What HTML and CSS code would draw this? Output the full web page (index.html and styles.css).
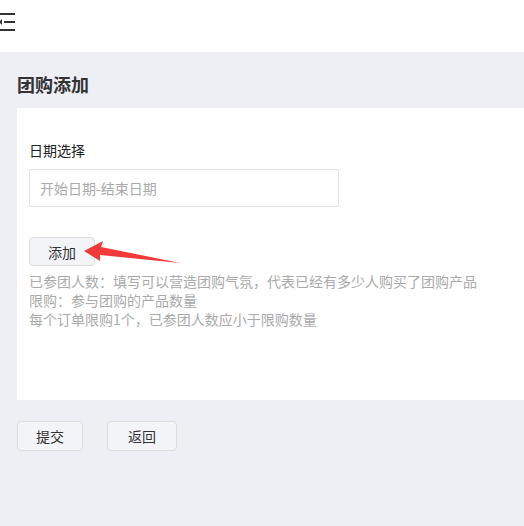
FILE: index.html
```html
<!DOCTYPE html>
<html lang="zh-CN">
<head>
  <meta charset="UTF-8" />
  <meta name="viewport" content="width=device-width, initial-scale=1.0"/>
  <title>团购添加</title>
  <link rel="stylesheet" href="styles.css">
</head>
<body>
  <header class="top-bar">
    <svg class="fold-icon" width="16" height="20" viewBox="0 0 16 20">
      <rect x="0" y="1" width="16" height="2" fill="#333"/>
      <rect x="5" y="9" width="11" height="2" fill="#333"/>
      <rect x="0" y="17" width="16" height="2" fill="#333"/>
      <polygon points="0,10 3,7 3,13" fill="#333"/>
    </svg>
  </header>

  <main class="page">
    <h1 class="page-title">团购添加</h1>

    <div class="card">
      <label class="field-label">日期选择</label>
      <input class="date-input" type="text" placeholder="开始日期-结束日期">

      <div class="add-row">
        <button class="btn btn-add">添加</button>
        <svg class="arrow" width="110" height="30" viewBox="0 0 110 30">
          <polygon points="0,14 19,4 17,10 96,26 16,18 16,24" fill="#f23a3a"/>
        </svg>
      </div>

      <div class="help-text">
        <p>已参团人数<span class="punct">：</span>填写可以营造团购气氛<span class="punct">，</span>代表已经有多少人购买了团购产品</p>
        <p>限购<span class="punct">：</span>参与团购的产品数量</p>
        <p>每个订单限购1个<span class="punct">，</span>已参团人数应小于限购数量</p>
      </div>
    </div>

    <div class="actions">
      <button class="btn btn-submit">提交</button>
      <button class="btn btn-back">返回</button>
    </div>
  </main>
</body>
</html>
```

FILE: styles.css
```css
body {
  margin: 0;
  font-family: "Noto Sans CJK SC", "Liberation Sans", sans-serif;
  font-size: 14px;
  color: #333;
  background-color: #eeeff4;
}
.top-bar {
  height: 52px;
  background-color: #fff;
  position: relative;
}
.fold-icon {
  position: absolute;
  left: -1px;
  top: 12px;
}
.page {
  padding: 20px 0 60px 17px;
}
.page-title {
  margin: 0 0 12px 0;
  font-size: 18px;
  line-height: 24px;
  font-weight: bold;
  color: #333;
}
.card {
  background-color: #fff;
  padding: 32px 0 0 12px;
  height: 260px;
}
.field-label {
  display: block;
  line-height: 20px;
  color: #222;
  margin-bottom: 9px;
}
.date-input {
  box-sizing: border-box;
  width: 310px;
  height: 38px;
  border: 1px solid #e2e2e2;
  border-radius: 2px;
  padding: 0 10px;
  font-family: inherit;
  font-size: 14px;
  outline: none;
}
.date-input::placeholder {
  color: #aaa;
}
.add-row {
  margin-top: 30px;
  position: relative;
}
.btn {
  box-sizing: border-box;
  height: 30px;
  padding: 0;
  font-family: inherit;
  font-size: 14px;
  color: #333;
  background-color: #f3f4f8;
  border: 1px solid #dcdcdc;
  border-radius: 4px;
  cursor: pointer;
}
.btn-add {
  width: 66px;
  height: 29px;
}
.arrow {
  position: absolute;
  left: 55px;
  top: 0px;
}
.help-text {
  margin-top: 6px;
  color: #aaa;
  line-height: 19px;
}
.help-text p {
  margin: 0;
}
.punct {
  font-family: "Noto Sans CJK TC", sans-serif;
}
.actions {
  display: flex;
  gap: 24px;
  margin-top: 21px;
}
.btn-submit {
  width: 66px;
}
.btn-back {
  width: 70px;
}
```
